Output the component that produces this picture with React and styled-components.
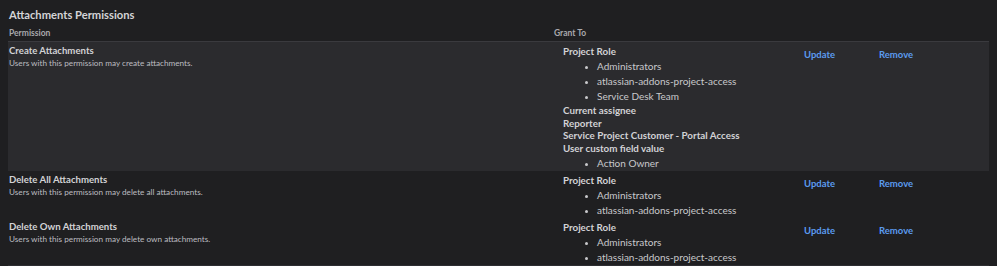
import React from "react";
import styled, { createGlobalStyle } from "styled-components";

const GlobalStyle = createGlobalStyle`
  html, body {
    margin: 0;
    background: #1f1f21;
  }
  body {
    font-family: Lato, "Noto Sans", sans-serif;
    color: #c9c9cc;
  }
`;

const rows = [
  {
    name: "Create Attachments",
    desc: "Users with this permission may create attachments.",
    shaded: true,
    grants: [
      { title: "Project Role", items: ["Administrators", "atlassian-addons-project-access", "Service Desk Team"] },
      { title: "Current assignee" },
      { title: "Reporter" },
      { title: "Service Project Customer - Portal Access" },
      { title: "User custom field value", items: ["Action Owner"] },
    ],
  },
  {
    name: "Delete All Attachments",
    desc: "Users with this permission may delete all attachments.",
    grants: [{ title: "Project Role", items: ["Administrators", "atlassian-addons-project-access"] }],
  },
  {
    name: "Delete Own Attachments",
    desc: "Users with this permission may delete own attachments.",
    grants: [{ title: "Project Role", items: ["Administrators", "atlassian-addons-project-access"] }],
  },
];

const App = () => {
  return (
    <Page>
      <GlobalStyle />
      <Title>Attachments Permissions</Title>
      <Table>
        <Head>
          <HeadCell>Permission</HeadCell>
          <HeadCell>Grant To</HeadCell>
          <HeadCell />
          <HeadCell />
        </Head>
        {rows.map((r) => (
          <Row key={r.name} shaded={r.shaded}>
            <PermCell>
              <PermName>{r.name}</PermName>
              <PermDesc>{r.desc}</PermDesc>
            </PermCell>
            <GrantCell>
              {r.grants.map((g) => (
                <Grant key={g.title}>
                  <GrantTitle>{g.title}</GrantTitle>
                  {g.items && (
                    <List>
                      {g.items.map((i) => (
                        <li key={i}>{i}</li>
                      ))}
                    </List>
                  )}
                </Grant>
              ))}
            </GrantCell>
            <LinkCell>
              <Link href="#">Update</Link>
            </LinkCell>
            <LinkCell>
              <Link href="#">Remove</Link>
            </LinkCell>
          </Row>
        ))}
      </Table>
    </Page>
  );
};

export default App;

const Page = styled.div`
  width: 997px;
  height: 266px;
  padding: 0 8px;
  box-sizing: border-box;
  overflow: hidden;
`;

const Title = styled.h2`
  margin: 0;
  padding: 8px 1px 0;
  height: 25px;
  box-sizing: border-box;
  font-size: 11.2px;
  line-height: 14px;
  font-weight: 700;
  color: #d4d4d7;
`;

const Table = styled.div`
  width: 981px;
  border-bottom: 2px solid #2e2e32;
`;

const cols = `grid-template-columns: 545px 241px 75px 1fr;`;

const Head = styled.div`
  display: grid;
  ${cols}
  height: 16px;
  border-bottom: 1px solid #3a3a3e;
`;

const HeadCell = styled.div`
  padding: 3px 1px 0;
  font-size: 8.5px;
  line-height: 11px;
  font-weight: 700;
  color: #a9a9ad;
`;

const Row = styled.div`
  display: grid;
  ${cols}
  background: ${({ shaded }) => (shaded ? "#2b2b2e" : "#1f1f21")};
  padding-top: 2.5px;
`;

const PermCell = styled.div`
  padding: 0 1px;
`;

const PermName = styled.div`
  font-size: 9.6px;
  font-weight: 700;
  line-height: 12px;
  color: #d2d2d5;
`;

const PermDesc = styled.div`
  font-size: 8.2px;
  line-height: 13px;
  color: #bcbcc0;
`;

const GrantCell = styled.div`
  padding-left: 10px;
`;

const Grant = styled.div``;

const GrantTitle = styled.div`
  font-size: 9.8px;
  font-weight: 700;
  line-height: 12.5px;
  color: #d2d2d5;
`;

const List = styled.ul`
  margin: 1.5px 0 0.5px;
  padding-left: 34px;
  font-size: 10px;
  line-height: 15px;
  color: #c9c9cc;

  li::marker {
    font-size: 8px;
  }
`;

const LinkCell = styled.div`
  padding: 4.5px 0 0 10px;
  font-size: 9.5px;
  line-height: 12px;
`;

const Link = styled.a`
  font-weight: 700;
  color: #5b9bf0;
  text-decoration: none;
`;
